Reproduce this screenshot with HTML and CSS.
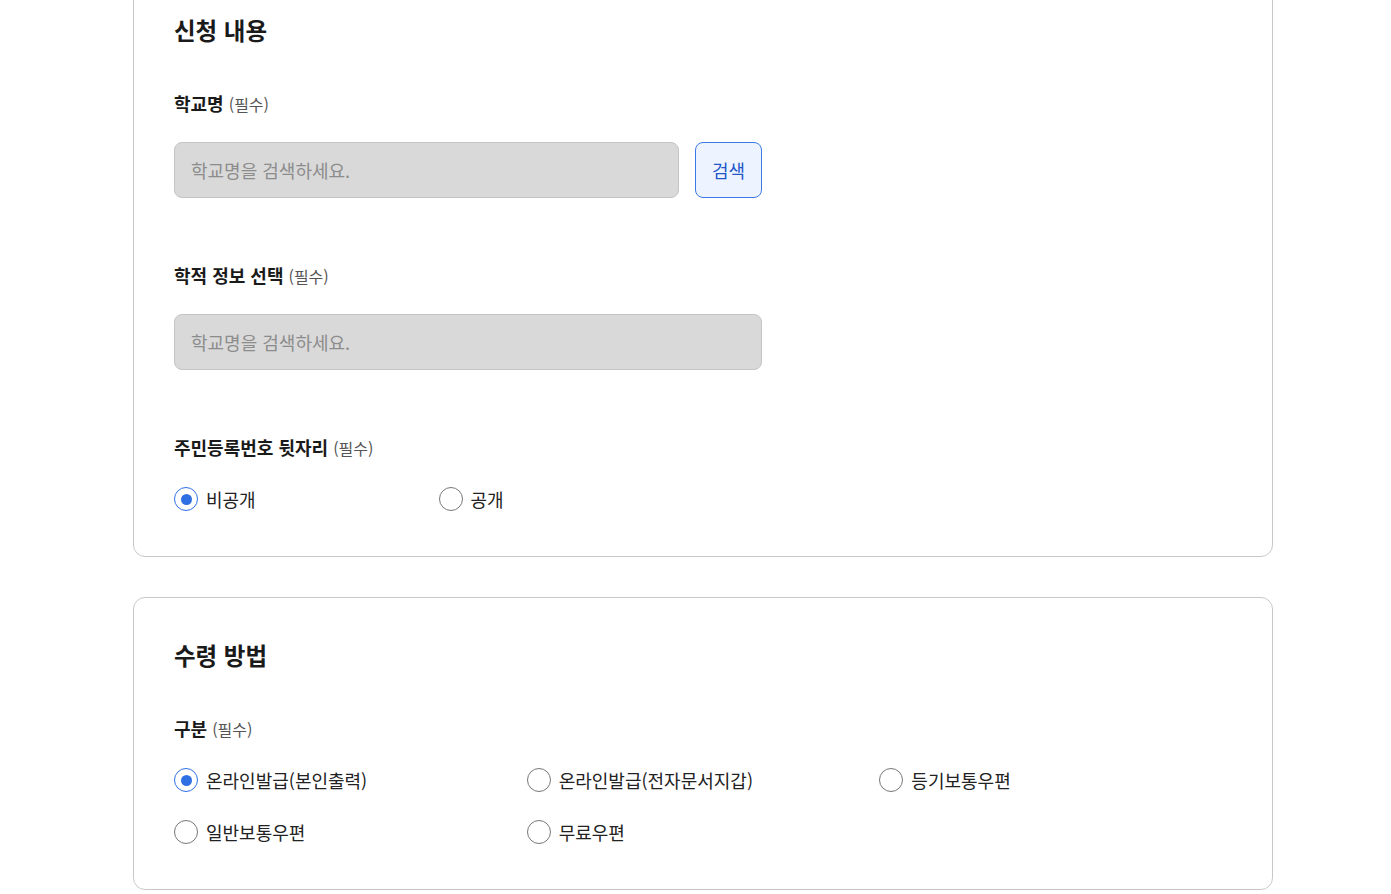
FILE: index.html
```html
<!DOCTYPE html>
<html lang="ko">
<head>
    <meta charset="UTF-8">
    <meta name="viewport" content="width=device-width, initial-scale=1.0">
    <title>증명서 신청</title>
    <link rel="stylesheet" href="styles.css">
</head>
<body>
    <div class="wrap">
        <section class="card">
            <h2 class="cardTitle">신청 내용</h2>

            <div class="field">
                <p class="fieldLabel">학교명 <span class="req">(필수)</span></p>
                <div class="searchRow">
                    <input class="textBox short" type="text" placeholder="학교명을 검색하세요." disabled>
                    <button class="searchBtn" type="button">검색</button>
                </div>
            </div>

            <div class="field">
                <p class="fieldLabel">학적 정보 선택 <span class="req">(필수)</span></p>
                <input class="textBox wide" type="text" placeholder="학교명을 검색하세요." disabled>
            </div>

            <div class="field last">
                <p class="fieldLabel">주민등록번호 뒷자리 <span class="req">(필수)</span></p>
                <div class="radioGrid four">
                    <label class="radio"><input type="radio" name="rrn" checked><span>비공개</span></label>
                    <label class="radio"><input type="radio" name="rrn"><span>공개</span></label>
                </div>
            </div>
        </section>

        <section class="card">
            <h2 class="cardTitle">수령 방법</h2>

            <div class="field last">
                <p class="fieldLabel">구분 <span class="req">(필수)</span></p>
                <div class="radioGrid three">
                    <label class="radio"><input type="radio" name="recv" checked><span>온라인발급(본인출력)</span></label>
                    <label class="radio"><input type="radio" name="recv"><span>온라인발급(전자문서지갑)</span></label>
                    <label class="radio"><input type="radio" name="recv"><span>등기보통우편</span></label>
                    <label class="radio"><input type="radio" name="recv"><span>일반보통우편</span></label>
                    <label class="radio"><input type="radio" name="recv"><span>무료우편</span></label>
                </div>
            </div>
        </section>
    </div>
</body>
</html>
```

FILE: styles.css
```css
*{
    margin: 0;
    padding: 0;
    box-sizing: border-box;
}
body{
    background: #fff;
    color: #1a1a1a;
    font-family: "Noto Sans CJK KR", "Noto Sans", sans-serif;
}
.wrap{
    width: 1140px;
    margin: -28px 0 0 133px;
    display: flex;
    flex-direction: column;
    gap: 40px;
}
.card{
    border: 1px solid #c8c8c8;
    border-radius: 12px;
    padding: 40px 40px 44px;
}
.cardTitle{
    font-size: 23.5px;
    line-height: 34px;
    font-weight: 700;
    margin-bottom: 44px;
}
.field{
    margin-bottom: 65px;
}
.field.last{
    margin-bottom: 0;
}
.fieldLabel{
    font-size: 18px;
    line-height: 24px;
    font-weight: 700;
    margin-bottom: 26px;
}
.req{
    font-size: 16px;
    font-weight: 400;
    color: #555;
}
/* inputs */
.searchRow{
    display: flex;
    gap: 16px;
}
.textBox{
    height: 56px;
    padding: 0 16px;
    border: 1px solid #c4c4c4;
    border-radius: 8px;
    background: #d9d9d9;
    font-family: inherit;
    font-size: 18px;
    color: #333;
}
.textBox::placeholder{
    color: #8c8c8c;
}
.textBox.short{
    width: 505px;
}
.textBox.wide{
    width: 588px;
}
.searchBtn{
    width: 67px;
    height: 56px;
    border: 1px solid #3b78e7;
    border-radius: 8px;
    background: #eef4ff;
    color: #2356c9;
    font-family: inherit;
    font-size: 18px;
}
/* radios */
.radioGrid{
    display: grid;
    row-gap: 26px;
}
.radioGrid.four{
    grid-template-columns: repeat(4, 1fr);
}
.radioGrid.three{
    grid-template-columns: repeat(3, 1fr);
}
.radio{
    display: flex;
    align-items: center;
    gap: 8px;
    height: 26px;
    font-size: 18px;
    color: #222;
}
.radio input{
    appearance: none;
    width: 24px;
    height: 24px;
    border: 1.5px solid #777;
    border-radius: 50%;
    background: #fff;
    display: grid;
    place-items: center;
}
.radio input:checked{
    border-color: #2f6fe4;
}
.radio input:checked::after{
    content: "";
    width: 11px;
    height: 11px;
    border-radius: 50%;
    background: #2f6fe4;
}
```
